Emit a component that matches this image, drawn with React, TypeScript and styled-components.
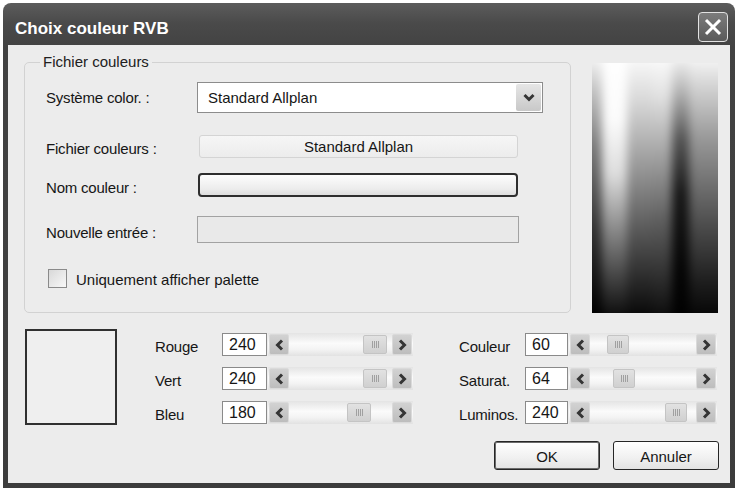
import styled, { createGlobalStyle } from "styled-components";

const GlobalStyle = createGlobalStyle`
  html, body {
    margin: 0;
    padding: 0;
    background: #ffffff;
  }
  body {
    font-family: "Liberation Sans", Arial, sans-serif;
    font-size: 15px;
    color: #161616;
  }
`;

interface SliderData {
  label: string;
  value: number;
  pos: number;
}

const rgbRows: SliderData[] = [
  { label: "Rouge", value: 240, pos: 73 },
  { label: "Vert", value: 240, pos: 73 },
  { label: "Bleu", value: 180, pos: 57 },
];

const hslRows: SliderData[] = [
  { label: "Couleur", value: 60, pos: 16 },
  { label: "Saturat.", value: 64, pos: 22 },
  { label: "Luminos.", value: 240, pos: 74 },
];

function Chevron({ dir }: { dir: "left" | "right" | "down" }) {
  const pts =
    dir === "left" ? "7,1.5 2.5,6 7,10.5" : dir === "right" ? "2,1.5 6.5,6 2,10.5" : "1.5,2 6,6.5 10.5,2";
  const w = dir === "down" ? 12 : 9;
  const h = dir === "down" ? 9 : 12;
  return (
    <svg width={w} height={h} viewBox={`0 0 ${w} ${h}`}>
      <polyline points={pts} fill="none" stroke="#353535" strokeWidth="3" strokeLinejoin="miter" />
    </svg>
  );
}

function SliderRow({ row, labelWidth, inputWidth, thumbWidth }: { row: SliderData; labelWidth: number; inputWidth: number; thumbWidth: number }) {
  return (
    <SliderLine $labelWidth={labelWidth} $inputWidth={inputWidth}>
      <SliderLabel>{row.label}</SliderLabel>
      <NumBox>{row.value}</NumBox>
      <ScrollBar>
        <ArrowBtn><Chevron dir="left" /></ArrowBtn>
        <Track>
          <Thumb $w={thumbWidth} style={{ left: row.pos }}>
            <Grip /><Grip /><Grip /><Grip />
          </Thumb>
        </Track>
        <ArrowBtn><Chevron dir="right" /></ArrowBtn>
      </ScrollBar>
    </SliderLine>
  );
}

export default function App() {
  return (
    <>
      <GlobalStyle />
      <Window>
        <TitleBar>
          <Title>Choix couleur RVB</Title>
          <CloseBtn>
            <svg width="18" height="18" viewBox="0 0 18 18">
              <line x1="2" y1="2" x2="16" y2="16" stroke="#fff" strokeWidth="3" />
              <line x1="16" y1="2" x2="2" y2="16" stroke="#fff" strokeWidth="3" />
            </svg>
          </CloseBtn>
        </TitleBar>
        <Body>
          <TopSection>
            <Group>
              <Legend>Fichier couleurs</Legend>
              <FormRow $mt={12}>
                <FieldLabel $drop={0}>Système color. :</FieldLabel>
                <Combo>
                  <ComboText>Standard Allplan</ComboText>
                  <ComboArrow><Chevron dir="down" /></ComboArrow>
                </Combo>
              </FormRow>
              <FormRow $mt={22}>
                <FieldLabel $drop={3}>Fichier couleurs :</FieldLabel>
                <FlatButton>Standard Allplan</FlatButton>
              </FormRow>
              <FormRow $mt={15}>
                <FieldLabel $drop={5}>Nom couleur :</FieldLabel>
                <FocusField />
              </FormRow>
              <FormRow $mt={19}>
                <FieldLabel $drop={5}>Nouvelle entrée :</FieldLabel>
                <DisabledField />
              </FormRow>
              <CheckRow>
                <CheckBox />
                <span>Uniquement afficher palette</span>
              </CheckRow>
            </Group>
            <Spectrum>
              <SpectrumStripes />
            </Spectrum>
          </TopSection>
          <BottomSection>
            <Preview />
            <Controls>
              <SliderColumns>
                <SliderGroup>
                  {rgbRows.map((r) => (
                    <SliderRow key={r.label} row={r} labelWidth={67} inputWidth={45} thumbWidth={24} />
                  ))}
                </SliderGroup>
                <SliderGroup>
                  {hslRows.map((r) => (
                    <SliderRow key={r.label} row={r} labelWidth={66} inputWidth={43} thumbWidth={22} />
                  ))}
                </SliderGroup>
              </SliderColumns>
              <ButtonRow>
                <DialogButton $default>OK</DialogButton>
                <DialogButton>Annuler</DialogButton>
              </ButtonRow>
            </Controls>
          </BottomSection>
        </Body>
      </Window>
    </>
  );
}

const Window = styled.div`
  margin: 3px 0 0 3px;
  width: 732px;
  height: 485px;
  box-sizing: border-box;
  padding: 0 5px 5px 5px;
  background: linear-gradient(to bottom, #5c5c5c 0px, #4a4a4a 20px, #424242 45px, #3c3c3c 100%);
  border-radius: 8px 8px 0 0;
  display: flex;
  flex-direction: column;
`;

const TitleBar = styled.div`
  height: 42px;
  display: flex;
  align-items: flex-end;
  justify-content: space-between;
  padding: 0 2px 3px 7px;
  box-sizing: border-box;
`;

const Title = styled.div`
  font-family: "Liberation Sans", Arial, sans-serif;
  font-weight: bold;
  font-size: 17px;
  line-height: 20px;
  color: #ffffff;
  margin-bottom: 3px;
`;

const CloseBtn = styled.div`
  width: 30px;
  height: 30px;
  box-sizing: border-box;
  border: 1px solid #e2e2e2;
  border-radius: 4px;
  background: linear-gradient(to bottom, #7c7c7c, #5a5a5a);
  display: flex;
  align-items: center;
  justify-content: center;
`;

const Body = styled.div`
  flex: 1;
  background: #ececec;
  display: flex;
  flex-direction: column;
`;

const TopSection = styled.div`
  display: flex;
  align-items: flex-start;
  padding-left: 16px;
`;

const Group = styled.fieldset`
  margin: 9px 0 0 0;
  padding: 0 0 0 21px;
  width: 547px;
  height: 259px;
  box-sizing: border-box;
  border: 1px solid #d2d2d2;
  border-radius: 5px;
  min-width: 0;
`;

const Legend = styled.legend`
  margin-left: -6px;
  padding: 0 3px;
  line-height: 16px;
  font-size: 15px;
  color: #202020;
`;

const FormRow = styled.div<{ $mt: number }>`
  display: grid;
  grid-template-columns: 151px auto;
  align-items: center;
  margin-top: ${(p) => p.$mt}px;
`;

const FieldLabel = styled.div<{ $drop: number }>`
  padding-top: ${(p) => p.$drop}px;
  white-space: nowrap;
  letter-spacing: -0.2px;
`;

const Combo = styled.div`
  width: 346px;
  height: 31px;
  box-sizing: border-box;
  border: 1px solid #8c8c8c;
  background: #ffffff;
  display: flex;
  align-items: center;
  justify-content: space-between;
  padding: 1px;
`;

const ComboText = styled.span`
  padding-left: 9px;
`;

const ComboArrow = styled.div`
  width: 25px;
  height: 27px;
  border-radius: 2px;
  background: linear-gradient(to bottom, #e6e6e6, #c8c8c8);
  display: flex;
  align-items: center;
  justify-content: center;
`;

const FlatButton = styled.div`
  margin-left: 2px;
  width: 319px;
  height: 23px;
  box-sizing: border-box;
  border: 1px solid #d4d4d4;
  border-radius: 3px;
  background: linear-gradient(to bottom, #f6f6f6, #ececec);
  display: flex;
  align-items: center;
  justify-content: center;
`;

const FocusField = styled.div`
  margin-left: 1px;
  width: 320px;
  height: 24px;
  box-sizing: border-box;
  border: 2px solid #2e2e2e;
  border-radius: 4px;
  background: linear-gradient(to bottom, #fdfdfd, #ececec 70%, #dedede);
`;

const DisabledField = styled.div`
  width: 322px;
  height: 27px;
  box-sizing: border-box;
  border: 1px solid #a2a2a2;
  background: #e9e9e9;
`;

const CheckRow = styled.div`
  display: flex;
  align-items: center;
  gap: 9px;
  margin: 26px 0 0 2px;
  span {
    padding-top: 1px;
  }
`;

const CheckBox = styled.div`
  width: 19px;
  height: 19px;
  box-sizing: border-box;
  border: 1px solid #8a8a8a;
  background: linear-gradient(135deg, #d8d8d8, #f8f8f8);
`;

const Spectrum = styled.div`
  margin: 18px 0 0 21px;
  width: 126px;
  height: 250px;
  overflow: hidden;
  background: #808080;
`;

const SpectrumStripes = styled.div`
  margin: -12px 0 0 -12px;
  width: 150px;
  height: 274px;
  filter: blur(5px);
  background-repeat: no-repeat;
  background-size: 22px 100%, 25px 100%, 25px 100%, 20px 100%, 17px 100%, 41px 100%;
  background-position: 0 0, 22px 0, 47px 0, 72px 0, 92px 0, 109px 0;
  background-image:
    linear-gradient(to bottom, #fff 0%, #c4c4c4 14%, #7a7a7a 35%, #333 65%, #000 95%),
    linear-gradient(to bottom, #fff 0%, #fbfbfb 25%, #dcdcdc 45%, #8a8a8a 65%, #3a3a3a 85%, #000 100%),
    linear-gradient(to bottom, #fff 0%, #d8d8d8 18%, #a4a4a4 38%, #5a5a5a 65%, #1e1e1e 88%, #000 100%),
    linear-gradient(to bottom, #fff 0%, #e2e2e2 16%, #ababab 35%, #5e5e5e 62%, #222 88%, #050505 100%),
    linear-gradient(to bottom, #fff 0%, #b8b8b8 14%, #555 32%, #181818 52%, #050505 80%, #000 100%),
    linear-gradient(to bottom, #fff 0%, #d6d6d6 12%, #989898 32%, #505050 62%, #1c1c1c 85%, #000 100%);
`;

const BottomSection = styled.div`
  display: flex;
  align-items: flex-start;
`;

const Preview = styled.div`
  margin: 16px 0 0 17px;
  width: 92px;
  height: 96px;
  box-sizing: border-box;
  border: 2px solid #303030;
  background: #efefef;
`;

const Controls = styled.div`
  margin: 20px 0 0 38px;
  display: flex;
  flex-direction: column;
`;

const SliderColumns = styled.div`
  display: flex;
  gap: 46px;
`;

const SliderGroup = styled.div`
  display: flex;
  flex-direction: column;
  gap: 11px;
`;

const SliderLine = styled.div<{ $labelWidth: number; $inputWidth: number }>`
  display: grid;
  grid-template-columns: ${(p) => p.$labelWidth}px ${(p) => p.$inputWidth}px 1fr;
  align-items: center;
  height: 23px;
  width: 258px;
`;

const SliderLabel = styled.div`
  white-space: nowrap;
  padding-top: 3px;
  letter-spacing: -0.2px;
`;

const NumBox = styled.div`
  height: 23px;
  box-sizing: border-box;
  border: 1px solid #8a8a8a;
  background: #ffffff;
  padding-left: 6px;
  line-height: 21px;
  font-size: 16px;
`;

const ScrollBar = styled.div`
  display: flex;
  align-items: center;
  height: 23px;
  margin-left: 1px;
  background: linear-gradient(to bottom, #e4e4e4, #fbfbfb 45%, #f4f4f4 70%, #e2e2e2);
`;

const ArrowBtn = styled.div`
  width: 20px;
  height: 21px;
  margin: 0 1px;
  box-sizing: border-box;
  border: 1px solid #dadada;
  border-radius: 2px;
  background: linear-gradient(to bottom, #d2d2d2, #bdbdbd);
  display: flex;
  align-items: center;
  justify-content: center;
`;

const Track = styled.div`
  flex: 1;
  height: 23px;
  position: relative;
`;

const Thumb = styled.div<{ $w: number }>`
  position: absolute;
  top: 2px;
  width: ${(p) => p.$w}px;
  height: 19px;
  box-sizing: border-box;
  border: 1px solid #c4c4c4;
  border-radius: 2px;
  background: linear-gradient(to bottom, #e2e2e2, #d0d0d0);
  display: flex;
  align-items: center;
  justify-content: center;
  gap: 1px;
`;

const Grip = styled.div`
  width: 1px;
  height: 7px;
  background: #a0a0a0;
`;

const ButtonRow = styled.div`
  display: flex;
  justify-content: flex-end;
  gap: 13px;
  margin: 17px -2px 0 0;
`;

const DialogButton = styled.div<{ $default?: boolean }>`
  width: 106px;
  height: 29px;
  box-sizing: border-box;
  border: 1px solid #262626;
  border-radius: 3px;
  background: linear-gradient(to bottom, #ffffff, #f0f0f0 60%, #e2e2e2);
  box-shadow: ${(p) => (p.$default ? "inset 0 0 0 1px #6a6a6a" : "none")};
  display: flex;
  align-items: center;
  justify-content: center;
  padding-top: 1px;
`;
